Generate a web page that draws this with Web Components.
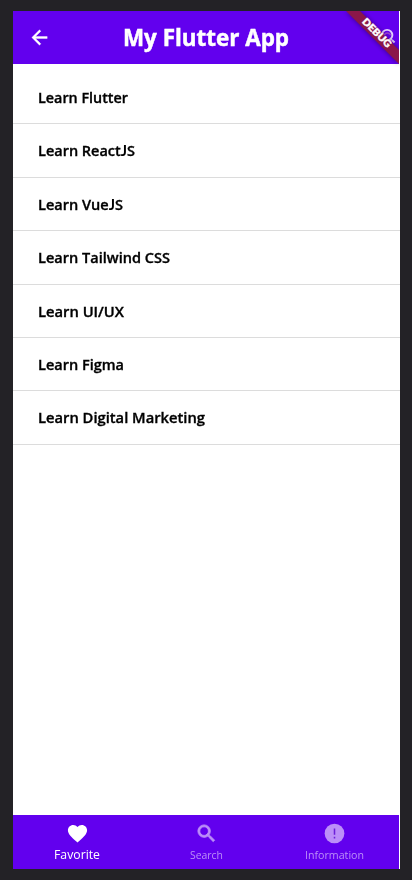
<!DOCTYPE html>
<html lang="en">
<head>
<meta charset="utf-8">
<title>My Flutter App</title>
<style>
html, body { margin: 0; height: 880px; overflow: hidden; background: #232226; }
</style>
</head>
<body>
<flutter-app></flutter-app>
<script>
const define = (name, html, ready) => customElements.define(name, class extends HTMLElement {
  connectedCallback() {
    if (this.shadowRoot) return;
    const t = document.createElement('template');
    t.innerHTML = html;
    this.attachShadow({ mode: 'open' }).append(t.content.cloneNode(true));
    if (ready) ready(this);
  }
});

/* A single line of text scaled horizontally to the width in its w attribute.
   The capital J is set in a face whose J stands on the baseline. */
define('fit-text', `
<style>
:host { display: block; white-space: nowrap; }
span { display: inline-block; transform-origin: 0 50%; }
b { font-family: Lato, sans-serif; font-weight: 700; line-height: 1; -webkit-text-stroke: 0; }
</style><span></span>`, el => {
  const s = el.shadowRoot.querySelector('span');
  s.innerHTML = el.getAttribute('label').replace('J', '<b>J</b>');
  const w = +el.getAttribute('w');
  el.style.width = w + 'px';
  s.style.transform = 'scaleX(' + w / s.getBoundingClientRect().width + ')';
});

const addText = el => {
  const f = document.createElement('fit-text');
  f.setAttribute('label', el.getAttribute('label'));
  f.setAttribute('w', el.getAttribute('w'));
  el.shadowRoot.append(f);
};

define('debug-banner', `
<style>
:host { position: absolute; top: 0; right: 0; width: 56px; height: 56px; pointer-events: none; }
svg { display: block; overflow: visible; }
text { font: 900 9.8px Lato, "Open Sans", sans-serif; fill: #fff; stroke: #fff; stroke-width: .4px; }
</style>
<svg width="56" height="56" viewBox="0 0 56 56">
  <defs>
    <filter id="f" x="-30%" y="-30%" width="160%" height="160%"><feGaussianBlur stdDeviation="2.5"/></filter>
    <clipPath id="c"><rect x="-10" y="0" width="66" height="64"/></clipPath>
  </defs>
  <g clip-path="url(#c)">
    <path d="M3 0H17L56 39V53Z" fill="#000" opacity=".45" filter="url(#f)"/>
    <path d="M3 0H17L56 39V53Z" fill="#8b1749"/>
    <path d="M41 24Q44 20 48 24" fill="none" stroke="#c9809f" stroke-width="1.5" opacity=".5"/>
  </g>
  <text transform="translate(34 21.8) rotate(45)" y="3.5" text-anchor="middle" textLength="36.5" lengthAdjust="spacingAndGlyphs">DEBUG</text>
</svg>`);

define('app-header', `
<style>
:host { position: relative; z-index: 1; display: flex; align-items: center; box-sizing: border-box; height: 52.5px; margin-right: 1px; padding: 0 0 0 15px; background: #6200ee; color: #fff; }
svg { display: block; fill: currentColor; }
svg:last-of-type { margin-left: auto; margin-right: -2px; }
fit-text { font: 700 24px/32px "Open Sans", sans-serif; margin: 0 0 1px 72px; -webkit-text-stroke: .5px #fff; }
</style>
<svg width="23" height="23" viewBox="0 0 24 24"><path d="M20 11H7.83l5.59-5.59L12 4l-8 8 8 8 1.41-1.41L7.83 13H20v-2z" stroke="#fff" stroke-width=".4"/></svg>
<fit-text label="My Flutter App" w="166"></fit-text>
<svg width="23" height="23" viewBox="0 0 24 24"><path d="M15.5 14h-.79l-.28-.27A6.47 6.47 0 0 0 16 9.5 6.5 6.5 0 1 0 9.5 16c1.61 0 3.09-.59 4.23-1.57l.27.28v.79L16.5 18 18 16.5zm-6 0C7.01 14 5 11.99 5 9.5S7.01 5 9.5 5 14 7.01 14 9.5 11.99 14 9.5 14z" opacity=".8"/></svg>
<debug-banner></debug-banner>`);

define('lesson-item', `
<style>
:host { display: flex; align-items: center; box-sizing: border-box; height: 53.42px; padding: 0 0 .5px 24.5px; border-bottom: 1px solid #dcdcdc; color: #000; }
fit-text { font: 600 15px/20px "Open Sans", sans-serif; -webkit-text-stroke: .35px #000; }
</style>`, addText);

define('nav-item', `
<style>
:host { display: flex; flex-direction: column; align-items: center; flex: 1; padding-top: 7px; color: #bc8ff8; font: 400 11.5px/16px "Open Sans", sans-serif; }
:host([active]) { color: #fff; font-size: 12.5px; }
::slotted(svg) { display: block; fill: currentColor; margin-bottom: 1.5px; }
</style>
<slot></slot>`, addText);

define('bottom-nav', `
<style>
:host { display: flex; height: 54px; margin: auto 1px 0 0; background: #6200ee; }
</style>
<nav-item active label="Favorite" w="46"><svg width="23" height="23" viewBox="0 0 24 24"><path d="M12 21.35l-1.45-1.32C5.4 15.36 2 12.28 2 8.5 2 5.42 4.42 3 7.5 3c1.74 0 3.41.81 4.5 2.09C13.09 3.81 14.76 3 16.5 3 19.58 3 22 5.42 22 8.5c0 3.78-3.4 6.86-8.55 11.54L12 21.35z"/></svg></nav-item>
<nav-item label="Search" w="33"><svg width="23" height="23" viewBox="0 0 24 24"><path d="M15.5 14h-.79l-.28-.27A6.47 6.47 0 0 0 16 9.5 6.5 6.5 0 1 0 9.5 16c1.61 0 3.09-.59 4.23-1.57l.27.28v.79l5 4.99L20.49 19l-4.99-5zm-6 0C7.01 14 5 11.99 5 9.5S7.01 5 9.5 5 14 7.01 14 9.5 11.99 14 9.5 14z" stroke="currentColor" stroke-width=".9"/></svg></nav-item>
<nav-item label="Information" w="59"><svg width="23" height="23" viewBox="0 0 24 24"><circle cx="12" cy="12" r="10.3"/><path d="M11.2 6.7h1.6v6.6h-1.6zM11.2 15.5h1.6v1.8h-1.6z" fill="#6d20d8"/></svg></nav-item>`);

define('flutter-app', `
<style>
:host { display: block; box-sizing: border-box; height: 880px; padding: 11px 12px 11px 13px; background: #232226; }
main { display: flex; flex-direction: column; height: 858px; background: #fff; }
section { padding-top: 7.5px; }
</style>
<main>
  <app-header></app-header>
  <section>
    <lesson-item label="Learn Flutter" w="90"></lesson-item>
    <lesson-item label="Learn ReactJS" w="97"></lesson-item>
    <lesson-item label="Learn VueJS" w="85"></lesson-item>
    <lesson-item label="Learn Tailwind CSS" w="132"></lesson-item>
    <lesson-item label="Learn UI/UX" w="86"></lesson-item>
    <lesson-item label="Learn Figma" w="86"></lesson-item>
    <lesson-item label="Learn Digital Marketing" w="167"></lesson-item>
  </section>
  <bottom-nav></bottom-nav>
</main>`);
</script>
</body>
</html>
